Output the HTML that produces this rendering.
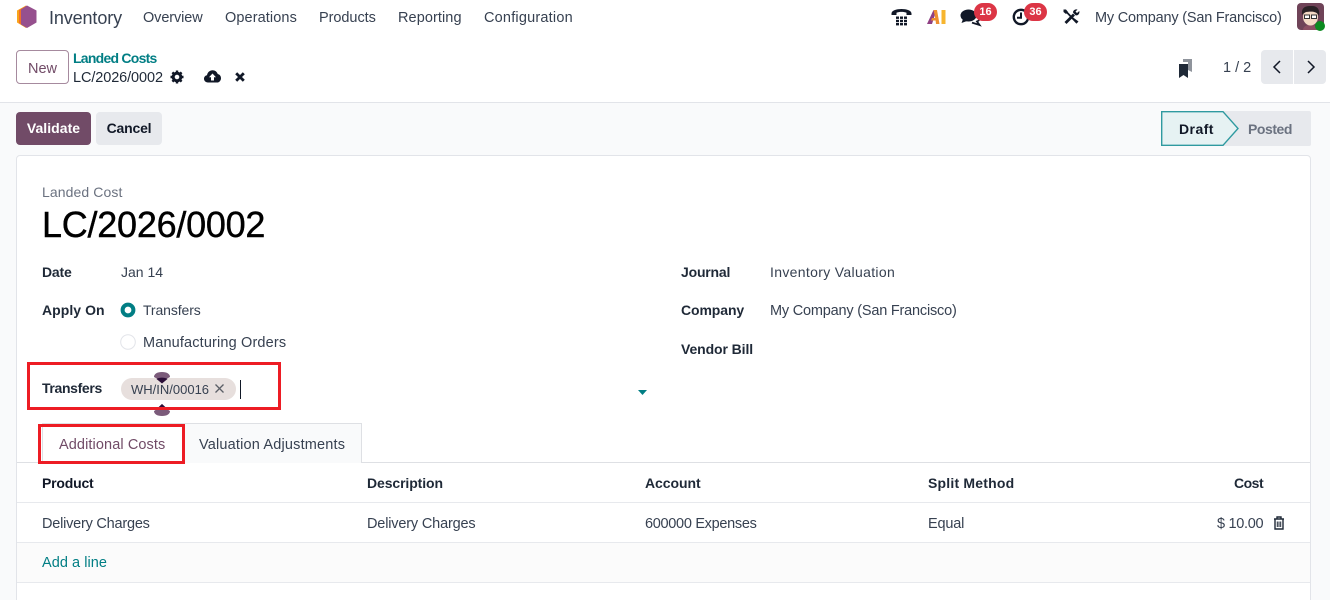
<!DOCTYPE html>
<html lang="en">
<head>
<meta charset="utf-8">
<title>Inventory</title>
<style>
html,body{margin:0;padding:0;width:1330px;height:600px;overflow:hidden;background:#f9fafb;font-family:"Liberation Sans",sans-serif;font-size:14.5px;color:#374151}
#p{position:relative;width:1330px;height:600px;overflow:hidden;background:#f9fafb}
.a{position:absolute;white-space:nowrap;line-height:20px}
.b{font-weight:700;color:#1f2937}
.box{position:absolute;box-sizing:border-box}
svg{position:absolute;overflow:visible}
.red{position:absolute;box-sizing:border-box;border:3px solid #ed1c24}
.nav{color:#374151;top:8px}
.badge{position:absolute;background:#dc3545;color:#fff;border-radius:10px;font-size:11px;font-weight:700;height:18px;line-height:18px;text-align:center}
</style>
</head>
<body>
<div id="p">
<!-- top white bars -->
<div class="box" style="left:0;top:0;width:1330px;height:103px;background:#fff;border-bottom:1px solid #e2e4e9"></div>

<!-- logo -->
<svg style="left:16px;top:5px" width="22" height="24" viewBox="0 0 22 24">
<path d="M10 0.5 L1 5.5 V17.5 L10 23 Z" fill="#f9a51a"/>
<path d="M11 0.5 L3 5 V18 L11 23 Z" fill="#f0702a"/>
<path d="M11 0.5 L20.5 5.5 V17.5 L11 23 L5 19.5 V4.5 Z" fill="#96508e"/>
</svg>
<div class="a" style="left:49px;top:8px;font-size:18px;color:#374151;letter-spacing:-.12px">Inventory</div>
<div class="a nav" style="left:143px;letter-spacing:-.1px">Overview</div>
<div class="a nav" style="left:225px;letter-spacing:.1px">Operations</div>
<div class="a nav" style="left:319px;letter-spacing:-.05px">Products</div>
<div class="a nav" style="left:398px;letter-spacing:.08px">Reporting</div>
<div class="a nav" style="left:484px;letter-spacing:.2px">Configuration</div>

<!-- systray -->
<svg style="left:891px;top:7px" width="22" height="20" viewBox="0 0 22 20">
<path d="M0.5 6.5 C0.5 0.5 20.5 0.5 20.5 6.5 V8 H15.5 V5.8 C13 4.6 8 4.6 5.5 5.8 V8 H0.5 Z" fill="#111827"/>
<g fill="#111827"><rect x="5" y="9.5" width="3" height="2.4"/><rect x="9" y="9.5" width="3" height="2.4"/><rect x="13" y="9.5" width="3" height="2.4"/><rect x="5" y="12.8" width="3" height="2.4"/><rect x="9" y="12.8" width="3" height="2.4"/><rect x="13" y="12.8" width="3" height="2.4"/><rect x="5" y="16" width="3" height="2.4"/><rect x="9" y="16" width="3" height="2.4"/><rect x="13" y="16" width="3" height="2.4"/></g>
</svg>
<svg style="left:927px;top:9px" width="19" height="16" viewBox="0 0 19 16">
<path d="M0 15 L6.5 1 H9.5 L5 15 Z" fill="#8f3f83"/>
<path d="M6.5 1 H10 L12.5 15 H9 L8.6 11.5 H4 L5 9 H8.2 Z" fill="#ee8f2f"/>
<rect x="14.5" y="1" width="4" height="14" fill="#f7b52e"/>
</svg>
<svg style="left:960px;top:9px" width="22" height="17" viewBox="0 0 22 17">
<ellipse cx="8.5" cy="6.5" rx="8" ry="6" fill="#111827"/>
<path d="M3 10 L1.5 14 L7 12 Z" fill="#111827"/>
<path d="M18 5 C21 7 20.5 11 17 12.5 L19.5 16 L12 13.6" fill="none" stroke="#111827" stroke-width="1.8"/>
</svg>
<div class="badge" style="left:974px;top:3px;width:23px">16</div>
<svg style="left:1012px;top:8px" width="18" height="18" viewBox="0 0 18 18">
<circle cx="9" cy="9" r="7.2" fill="none" stroke="#111827" stroke-width="2.4"/>
<path d="M9 4.5 V9.8 H5" fill="none" stroke="#111827" stroke-width="2"/>
</svg>
<div class="badge" style="left:1024px;top:3px;width:23px">36</div>
<svg style="left:1063px;top:9px" width="17" height="16" viewBox="0 0 17 16">
<path d="M1.5 1 L4 3.5 L14 14" stroke="#111827" stroke-width="1.8" fill="none"/>
<path d="M0.5 0.5 H3 L5 3 L3 5 L0.5 3 Z" fill="#111827"/>
<path d="M9.5 8 L13.5 14.5 L15.5 12.5 Z" fill="#111827"/>
<path d="M11 5.5 L2.5 14" stroke="#111827" stroke-width="2.8"/>
<path d="M10 3.5 C10 1.5 12 0 14.5 0.5 L12.5 2.6 L14 4 L16.3 2 C17 4.5 15 7 12.5 6.3 Z" fill="#111827"/>
</svg>
<div class="a" style="left:1095px;top:8px;letter-spacing:-.2px">My Company (San Francisco)</div>
<!-- avatar -->
<svg style="left:1297px;top:3px" width="28" height="29" viewBox="0 0 28 29">
<rect width="27" height="27" rx="4" fill="#6f4358"/>
<path d="M6 27 C6 20 21 20 22 27 Z" fill="#8b4f63"/>
<ellipse cx="13.5" cy="14" rx="7.5" ry="8.5" fill="#f3d9c4"/>
<path d="M5 12 C4 3 10 3 15 3 C21 3 23 7 22 13 C20 9 17 8 9 9 C7 10 6 11 5 12 Z" fill="#2a2226"/>
<rect x="7.5" y="12" width="5" height="3.5" fill="#fff" stroke="#333" stroke-width="1"/>
<rect x="14.5" y="12" width="5" height="3.5" fill="#fff" stroke="#333" stroke-width="1"/>
<circle cx="23" cy="23" r="5" fill="#0b8a1f"/>
</svg>

<!-- control panel -->
<div class="box" style="left:16px;top:50px;width:53px;height:34px;border:1px solid #a68a9e;border-radius:4px;background:#fff;text-align:center;line-height:36px;color:#714b67;font-size:14.5px">New</div>
<div class="a" style="left:73px;top:48px;color:#017e84;font-weight:700;font-size:14px;letter-spacing:-.75px">Landed Costs</div>
<div class="a" style="left:73px;top:68px;color:#1f2937;letter-spacing:-.1px">LC/2026/0002</div>
<svg style="left:170px;top:70px" width="14" height="14" viewBox="0 0 14 14">
<circle cx="7" cy="7" r="3.8" fill="none" stroke="#111827" stroke-width="3"/>
<path d="M7 0.5V3M7 11V13.5M0.5 7H3M11 7H13.5M2.4 2.4L4 4M10 10L11.6 11.6M11.6 2.4L10 4M4 10L2.4 11.6" stroke="#111827" stroke-width="2.4"/>
</svg>
<svg style="left:204px;top:70px" width="17" height="13" viewBox="0 0 17 13">
<path d="M4 12.5 C1.5 12.5 0 10.8 0 8.8 C0 7 1.2 5.6 3 5.3 C3.4 2.4 5.8 0.3 8.6 0.3 C11 0.3 13 1.8 13.7 4 C15.6 4.4 17 6 17 8.2 C17 10.6 15.2 12.5 13 12.5 Z" fill="#111827"/>
<path d="M8.5 3.5 L12 7.2 H10 V10.5 H7 V7.2 H5 Z" fill="#fff"/>
</svg>
<svg style="left:235px;top:72px" width="10" height="10" viewBox="0 0 10 10">
<path d="M1.2 1.2 L8.8 8.8 M8.8 1.2 L1.2 8.8" stroke="#111827" stroke-width="2.8"/>
</svg>

<svg style="left:1178px;top:59px" width="15" height="20" viewBox="0 0 15 20">
<path d="M5 0 H14 V13 L10 11 V3 H5 Z" fill="#8f949c"/>
<path d="M1 5 H10 V19 L5.5 16 L1 19 Z" fill="#1f2937"/>
</svg>
<div class="a" style="left:1223px;top:58px;color:#374151">1 / 2</div>
<div class="box" style="left:1261px;top:50px;width:32px;height:34px;background:#e7e9ed;border-radius:4px 0 0 4px"></div>
<div class="box" style="left:1294px;top:50px;width:32px;height:34px;background:#e7e9ed;border-radius:0 4px 4px 0"></div>
<svg style="left:1272px;top:60px" width="10" height="14" viewBox="0 0 10 14"><path d="M8 1 L2 7 L8 13" fill="none" stroke="#111827" stroke-width="1.5"/></svg>
<svg style="left:1306px;top:60px" width="10" height="14" viewBox="0 0 10 14"><path d="M2 1 L8 7 L2 13" fill="none" stroke="#111827" stroke-width="1.5"/></svg>

<!-- action buttons -->
<div class="box" style="left:16px;top:112px;width:75px;height:33px;background:#714b67;border-radius:4px;color:#fff;font-weight:700;text-align:center;line-height:33px;font-size:14px;letter-spacing:.05px">Validate</div>
<div class="box" style="left:96px;top:112px;width:66px;height:33px;background:#e7e9ed;border-radius:4px;color:#111827;font-weight:700;text-align:center;line-height:33px;font-size:14px;letter-spacing:-.2px">Cancel</div>

<!-- statusbar -->
<svg style="left:1161px;top:111px" width="150" height="35" viewBox="0 0 150 35">
<rect x="60" y="0" width="90" height="35" rx="2" fill="#e7e9ed"/>
<path d="M0.7 0.7 H62 L77 17.5 L62 34.3 H0.7 Z" fill="#e6f2f3" stroke="#2f9aa0" stroke-width="1.4"/>
</svg>
<div class="a" style="left:1179px;top:119px;font-weight:700;color:#111827;font-size:14px;letter-spacing:.45px">Draft</div>
<div class="a" style="left:1248px;top:119px;font-weight:700;color:#6b7280;font-size:14px;letter-spacing:-.45px">Posted</div>

<!-- sheet -->
<div class="box" style="left:16px;top:155px;width:1295px;height:460px;background:#fff;border:1px solid #e2e4e9;border-radius:4px"></div>

<div class="a" style="left:42px;top:182px;color:#6b7280;font-size:14px;letter-spacing:.1px">Landed Cost</div>
<div class="a" style="left:42px;top:204px;color:#000;font-size:36px;line-height:42px;letter-spacing:-.25px;-webkit-text-stroke:.4px #000">LC/2026/0002</div>

<div class="a b" style="left:42px;top:262px;font-size:14px;letter-spacing:-.2px">Date</div>
<div class="a" style="left:121px;top:262px;font-size:14px">Jan 14</div>
<div class="a b" style="left:42px;top:300px;font-size:14px;letter-spacing:.05px">Apply On</div>
<svg style="left:120px;top:302px" width="16" height="16" viewBox="0 0 16 16"><circle cx="8" cy="8" r="5.4" fill="#fff" stroke="#017e84" stroke-width="4"/></svg>
<div class="a" style="left:143px;top:300px;font-size:14px;letter-spacing:-.1px">Transfers</div>
<svg style="left:120px;top:334px" width="16" height="16" viewBox="0 0 16 16"><circle cx="8" cy="8" r="7.3" fill="#fff" stroke="#e2e4e9" stroke-width="1"/></svg>
<div class="a" style="left:143px;top:333px;letter-spacing:.15px;font-size:14.5px">Manufacturing Orders</div>

<div class="a b" style="left:681px;top:262px;font-size:14px;letter-spacing:-.2px">Journal</div>
<div class="a" style="left:770px;top:262px;font-size:14px;letter-spacing:.33px">Inventory Valuation</div>
<div class="a b" style="left:681px;top:300px;font-size:14px;letter-spacing:-.1px">Company</div>
<div class="a" style="left:770px;top:301px;font-size:14.5px;letter-spacing:-.2px">My Company (San Francisco)</div>
<div class="a b" style="left:681px;top:339px;font-size:14px;letter-spacing:-.1px">Vendor Bill</div>

<!-- transfers field -->
<div class="a b" style="left:42px;top:378px;font-size:14px;letter-spacing:-.35px">Transfers</div>
<div class="box" style="left:121px;top:378px;width:115px;height:22px;background:#e7dfdd;border-radius:11px"></div>
<div class="a" style="left:131px;top:380px;font-size:13px;color:#374151;letter-spacing:0">WH/IN/00016</div>
<svg style="left:215px;top:384px" width="9" height="9" viewBox="0 0 9 9"><path d="M.5 .5 L8.5 8.5 M8.5 .5 L.5 8.5" stroke="#5b5f66" stroke-width="1.3"/></svg>
<div class="box" style="left:240px;top:380px;width:1px;height:19px;background:#111827"></div>
<svg style="left:153px;top:371px" width="18" height="13" viewBox="0 0 18 13">
<path d="M1 6 C1 3 4 1 9 1 C14 1 17 3 17 6 C15 7 13 8 9 12 C5 8 3 7 1 6 Z" fill="#7b5b7a"/>
<path d="M3.5 8 C6 6.2 12 6.2 14.5 8 L9 12.5 Z" fill="#2c0f38"/>
</svg>
<svg style="left:153px;top:403px" width="18" height="14" viewBox="0 0 18 14">
<path d="M1 8 C3 7 5 5 9 1 C13 5 15 7 17 8 C17 11 14 13 9 13 C4 13 1 11 1 8 Z" fill="#7b5b7a"/>
<path d="M9 1 L14.5 6 C12 7.4 6 7.4 3.5 6 Z" fill="#2c0f38"/>
</svg>
<svg style="left:638px;top:390px" width="9" height="5" viewBox="0 0 9 5"><path d="M0 0 H9 L4.5 5 Z" fill="#017e84"/></svg>

<!-- tabs -->
<div class="box" style="left:17px;top:462px;width:1293px;height:1px;background:#dee0e4"></div>
<div class="box" style="left:42px;top:423px;width:142px;height:40px;background:#fff;border:1px solid #dee0e4;border-bottom:0"></div>
<div class="box" style="left:183px;top:423px;width:179px;height:40px;background:#f9fafb;border:1px solid #dee0e4;border-bottom:0"></div>
<div class="a" style="left:59px;top:435px;color:#714b67;font-size:14.5px;letter-spacing:.1px">Additional Costs</div>
<div class="a" style="left:199px;top:435px;color:#374151;font-size:14.5px;letter-spacing:.18px">Valuation Adjustments</div>

<!-- table -->
<div class="a b" style="left:42px;top:473px;color:#111827;font-size:14px;letter-spacing:-.2px">Product</div>
<div class="a b" style="left:367px;top:473px;font-size:14px;letter-spacing:-.1px">Description</div>
<div class="a b" style="left:645px;top:473px;font-size:14px;letter-spacing:-.05px">Account</div>
<div class="a b" style="left:928px;top:473px;font-size:14px;letter-spacing:.2px">Split Method</div>
<div class="a b" style="left:1234px;top:473px;font-size:14px;letter-spacing:-.5px">Cost</div>
<div class="box" style="left:17px;top:502px;width:1293px;height:1px;background:#e7e9ed"></div>
<div class="a" style="left:42px;top:514px;font-size:14.5px;letter-spacing:-.22px">Delivery Charges</div>
<div class="a" style="left:367px;top:514px;font-size:14.5px;letter-spacing:-.17px">Delivery Charges</div>
<div class="a" style="left:645px;top:514px;font-size:14.5px;letter-spacing:-.3px">600000 Expenses</div>
<div class="a" style="left:928px;top:514px;font-size:14.5px;letter-spacing:-.2px">Equal</div>
<div class="a" style="left:1217px;top:514px;font-size:14.5px;letter-spacing:-.3px">$ 10.00</div>
<svg style="left:1273px;top:516px" width="12" height="14" viewBox="0 0 12 14">
<path d="M1 3 H11 M4 3 V1 H8 V3" fill="none" stroke="#1f2937" stroke-width="1.4"/>
<path d="M2 3.5 V13 H10 V3.5" fill="none" stroke="#1f2937" stroke-width="1.4"/>
<path d="M4.3 5.5 V11 M6 5.5 V11 M7.7 5.5 V11" stroke="#1f2937" stroke-width="1"/>
</svg>
<div class="box" style="left:17px;top:542px;width:1293px;height:41px;background:#fbfbfb;border-top:1px solid #e7e9ed;border-bottom:1px solid #e7e9ed"></div>
<div class="a" style="left:42px;top:553px;color:#017e84;font-size:14.5px;letter-spacing:.05px">Add a line</div>

<!-- annotations -->
<div class="red" style="left:27px;top:362px;width:254px;height:48px"></div>
<div class="red" style="left:38px;top:424px;width:147px;height:40px"></div>
</div>
</body>
</html>
